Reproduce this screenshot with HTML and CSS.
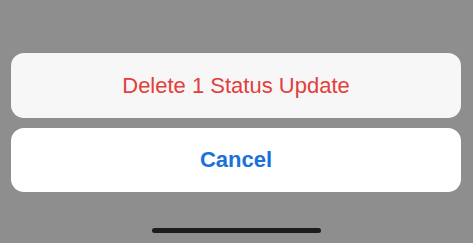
FILE: index.html
```html
<!DOCTYPE html>
<html>
<head>
<meta charset="utf-8">
<link rel="stylesheet" href="styles.css">
</head>
<body>
<div class="screen">
  <div class="sheet">
    <div class="action destructive">Delete 1 Status Update</div>
    <div class="action cancel">Cancel</div>
  </div>
  <div class="home-indicator"></div>
</div>
</body>
</html>
```
FILE: styles.css
```css
html, body {
  margin: 0;
  padding: 0;
  background: #8e8e8e;
}
.screen {
  width: 473px;
  height: 243px;
  display: flex;
  flex-direction: column;
  align-items: center;
  box-sizing: border-box;
  padding-top: 53px;
  font-family: "Liberation Sans", Arial, sans-serif;
}
.sheet {
  width: 450px;
  display: flex;
  flex-direction: column;
  gap: 10px;
  margin-left: -1px;
}
.action {
  height: 65px;
  border-radius: 13px;
  display: flex;
  align-items: center;
  justify-content: center;
  font-size: 22px;
}
.destructive {
  background: #f7f7f7;
  color: #e2403c;
}
.cancel {
  height: 64px;
  background: #ffffff;
  color: #1a72d8;
  font-weight: bold;
}
.home-indicator {
  width: 169px;
  height: 5px;
  border-radius: 3px;
  background: #1c1c1c;
  margin-top: 36px;
}
```
